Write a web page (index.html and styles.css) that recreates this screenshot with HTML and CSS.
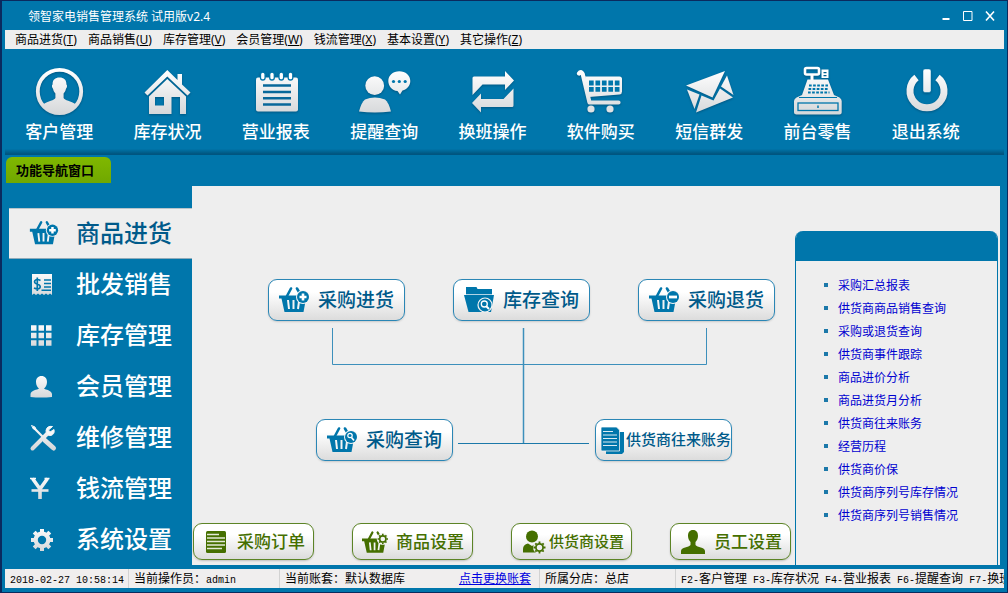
FILE: index.html
```html
<!DOCTYPE html>
<html lang="zh-CN">
<head>
<meta charset="utf-8">
<title>领智家电销售管理系统</title>
<link rel="stylesheet" href="styles.css">
</head>
<body>
<svg class="defs" aria-hidden="true">
  <defs>
    <linearGradient id="silver" gradientUnits="userSpaceOnUse" x1="0" y1="4" x2="0" y2="48">
      <stop offset="0" stop-color="#ffffff"/><stop offset="1" stop-color="#d6d8da"/>
    </linearGradient>
    <linearGradient id="silver-small" gradientUnits="userSpaceOnUse" x1="0" y1="2" x2="0" y2="28">
      <stop offset="0" stop-color="#ffffff"/><stop offset="1" stop-color="#d4d6d8"/>
    </linearGradient>
    <clipPath id="avatar-clip"><circle cx="28.5" cy="25.5" r="21"/></clipPath>
    <g id="basket">
      <path d="M8 9 12 1.5M18 1.5 20 5" fill="none" stroke="currentColor" stroke-width="2.6" stroke-linecap="round"/>
      <path d="M0 8.5H25V11.5H27L24.5 25H5.5L2.5 11.5H0Z" fill="currentColor"/>
      <path d="M9 13 10 22M14.5 13V22M20 14.5 19 22" fill="none" stroke="#f4f4f4" stroke-width="2"/>
    </g>
    <g id="gear">
      <circle r="3.6" fill="none" stroke="currentColor" stroke-width="1.8"/>
      <path d="M0-6V-4M0 6V4M-6 0H-4M6 0H4M-4.2-4.2-3-3M4.2-4.2 3-3M-4.2 4.2-3 3M4.2 4.2 3 3" stroke="currentColor" stroke-width="1.8"/>
    </g>
  </defs>
</svg>

<div class="window">
  <header class="titlebar">
    <h1 class="title">领智家电销售管理系统 试用版v2.4</h1>
    <div class="window-buttons">
      <button class="window-button" aria-label="最小化"><svg width="10" height="12" viewBox="0 0 10 12"><path d="M1.500 9H8.500" stroke="#fff" stroke-width="2"/></svg></button>
      <button class="window-button" aria-label="最大化"><svg width="10" height="12" viewBox="0 0 10 12"><path d="M.5 1.500H9V10.500H.5Z" fill="none" stroke="#fff"/></svg></button>
      <button class="window-button" aria-label="关闭"><svg width="10" height="12" viewBox="0 0 10 12"><path d="M1 1.500 9 10.500M9 1.500 1 10.500" stroke="#fff" stroke-width="1.600"/></svg></button>
    </div>
  </header>

  <nav class="menubar" aria-label="菜单">
    <button class="menu-item">商品进货(<u>T</u>)</button>
    <button class="menu-item">商品销售(<u>U</u>)</button>
    <button class="menu-item">库存管理(<u>V</u>)</button>
    <button class="menu-item">会员管理(<u>W</u>)</button>
    <button class="menu-item">钱流管理(<u>X</u>)</button>
    <button class="menu-item">基本设置(<u>Y</u>)</button>
    <button class="menu-item">其它操作(<u>Z</u>)</button>
  </nav>

  <div class="toolbar">
    <button class="tool">
      <svg class="tool-icon" viewBox="0 0 56 52">
        <circle cx="28.500" cy="25.500" r="21.700" fill="none" stroke="url(#silver)" stroke-width="3.800"/>
        <path clip-path="url(#avatar-clip)" fill="url(#silver)" d="M28.500 11.500C33 11.500 35.600 14 35.400 18.500 36.500 19 36 22 35 22.600 34.600 25 33.600 26.500 32.600 27.600V32C33.500 34.300 40 35 45 38.500L40 48H17L12 38.500C17 35 23.500 34.300 24.400 32V27.600C23.400 26.500 22.400 25 22 22.600 21 22 20.500 19 21.600 18.500 21.400 14 24 11.500 28.500 11.500Z"/>
      </svg>
      <span class="tool-label">客户管理</span>
    </button>
    <button class="tool">
      <svg class="tool-icon" viewBox="0 0 56 52" fill="url(#silver)">
        <path d="M28.300 4 38.500 14V8H43V18.500L51.500 26.500 48.500 29.500 28.300 10.500 8.500 29.500 5.500 26.500Z"/>
        <path fill-rule="evenodd" d="M28.300 13 47 30.500V48H41V31H32.500V48H10V30.500ZM16 31V39.500H25V31Z"/>
      </svg>
      <span class="tool-label">库存状况</span>
    </button>
    <button class="tool">
      <svg class="tool-icon" viewBox="0 0 56 52">
        <rect x="8" y="11.500" width="42" height="34" rx="2" fill="url(#silver)"/>
        <g fill="#fff" stroke="#0076ab" stroke-width="1.300"><rect x="12.500" y="6" width="4.600" height="8" rx="2.300"/><rect x="21.700" y="6" width="4.600" height="8" rx="2.300"/><rect x="31" y="6" width="4.600" height="8" rx="2.300"/><rect x="40.200" y="6" width="4.600" height="8" rx="2.300"/></g>
        <path d="M15 19.500H43M15 26H43M15 32.300H43M15 38.500H43" stroke="#08689a" stroke-width="2.400"/>
      </svg>
      <span class="tool-label">营业报表</span>
    </button>
    <button class="tool">
      <svg class="tool-icon" viewBox="0 0 56 52" fill="url(#silver)">
        <circle cx="18.700" cy="19.700" r="9.400"/>
        <path d="M9 33.500Q18.700 29.500 29 33.500 32.500 36 35 45.500 18.700 47.500 3 45.500 5.500 36 9 33.500Z"/>
        <path d="M43.300 5.300C49.500 5.300 54.300 9.500 54.300 15 54.300 19.500 51 23.500 46.500 24.500L44 28.500 41.500 25C36 24.500 32.300 20 32.300 15 32.300 9.500 37 5.300 43.300 5.300Z"/>
        <g fill="#0076ab"><circle cx="37.500" cy="15.500" r="1.600"/><circle cx="43.300" cy="15.500" r="1.600"/><circle cx="49.200" cy="15.500" r="1.600"/></g>
      </svg>
      <span class="tool-label">提醒查询</span>
    </button>
    <button class="tool">
      <svg class="tool-icon" viewBox="0 0 56 52" fill="url(#silver)">
        <path d="M10 10.500H41V5L50 14.500 41 24V18.500H18.500L8.500 29V12Q8.500 10.500 10 10.500Z"/>
        <path d="M48 41H17V46.500L8 37 17 27.500V33H39.500L49.500 22.500V39.500Q49.500 41 48 41Z"/>
      </svg>
      <span class="tool-label">换班操作</span>
    </button>
    <button class="tool">
      <svg class="tool-icon" viewBox="0 0 56 52">
        <path d="M6 7.500Q8 4.500 9.700 8L16.500 36.500H45.500" fill="none" stroke="url(#silver)" stroke-width="4.200" stroke-linecap="round" stroke-linejoin="round"/>
        <path d="M12 10.500H46.500Q49 10.500 49 13V25.500Q49 28 46.500 28.500L16 31Z" fill="url(#silver)"/>
        <path d="M16 17H46.500M16 23.300H46.500" stroke="#0076ab" stroke-width="4.800" stroke-dasharray="4.700 1.750"/>
        <circle cx="18" cy="43" r="3.600" fill="#e0e2e4"/><circle cx="37" cy="43" r="3.600" fill="#e0e2e4"/>
      </svg>
      <span class="tool-label">软件购买</span>
    </button>
    <button class="tool">
      <svg class="tool-icon" viewBox="0 0 56 52" fill="url(#silver)">
        <path d="M5 19.500 44 5 31.500 31.500Z"/>
        <path d="M6 23.500 18.500 28.500 13.500 43Z"/>
        <path d="M20.500 29.500 32.500 34.500 39 22.500 52 31.500 15 46.500Z"/>
        <path d="M46 9.500 52.500 29 40 20.500Z"/>
      </svg>
      <span class="tool-label">短信群发</span>
    </button>
    <button class="tool">
      <svg class="tool-icon" viewBox="0 0 56 52">
        <rect x="16" y="2" width="14" height="6.500" rx="1.500" fill="none" stroke="#fff" stroke-width="2.600"/>
        <path d="M23 9V15" stroke="#fff" stroke-width="3"/>
        <path fill-rule="evenodd" d="M32.500 3.500H39.500V12H32.500ZM34.500 6V7.200H37.500V6ZM34.500 9V10.200H37.500V9Z" fill="#fff"/>
        <path d="M18.500 13.500H39L45 29 50.500 31.500Q52.700 33 52.700 35V46.500Q52.700 48.500 50.500 48.500H7.500Q5 48.500 5 46.500V35Q5 33 7.500 31.500L13 29Z" fill="url(#silver)"/>
        <path d="M20 19.500H39M19.500 23H40M19 26.500H40.500" stroke="#0076ab" stroke-width="2.200" stroke-dasharray="2.700 1.400"/>
        <path d="M10 31.500H48" stroke="#0076ab" stroke-width="1"/>
        <rect x="9" y="37" width="40" height="7.500" fill="none" stroke="#0076ab" stroke-width="1.300"/>
        <path d="M29 39.500V42" stroke="#0076ab" stroke-width="1.500"/>
      </svg>
      <span class="tool-label">前台零售</span>
    </button>
    <button class="tool">
      <svg class="tool-icon" viewBox="0 0 56 52" fill="none">
        <path d="M18.500 11.500A17 17 0 1 0 39.500 11.500" stroke="url(#silver)" stroke-width="7"/>
        <rect x="25" y="3" width="8" height="23.500" rx="2" fill="url(#silver)" stroke="#0076ab" stroke-width=".5"/>
      </svg>
      <span class="tool-label">退出系统</span>
    </button>
  </div>

  <div class="tabs"><button class="tab">功能导航窗口</button></div>

  <div class="workspace">
    <nav class="sidebar" aria-label="功能导航">
      <button class="side-item side-item-active">
        <svg class="side-icon" viewBox="-2 -3 34 34"><use href="#basket"/><circle cx="24" cy="10" r="7" fill="#eee"/><circle cx="24" cy="10" r="6" fill="currentColor"/><path d="M24 6.500V13.500M20.500 10H27.500" stroke="#fff" stroke-width="2.600"/></svg>
        <span class="side-label">商品进货</span>
      </button>
      <button class="side-item">
        <svg class="side-icon" viewBox="0 0 32 32"><path d="M4 5H24V26L22 24.500 20 26 18 24.500 16 26 14 24.500 12 26 10 24.500 8 26 6 24.500 4 26Z" fill="url(#silver-small)"/><path d="M16 11H23M16 14.500H23M16 18H23M13.500 21.300H23" stroke="#0076ab" stroke-width="1.500"/><path d="M12.500 11.500Q9 9.500 7 11.500 5.500 14 9 15 13 16 12 18.700 10 21 6 19M9.300 8.500V22" fill="none" stroke="#0076ab" stroke-width="1.700"/></svg>
        <span class="side-label">批发销售</span>
      </button>
      <button class="side-item">
        <svg class="side-icon" viewBox="0 0 32 32"><path d="M3 8H24M3 15.500H24M3 23H24" stroke="url(#silver-small)" stroke-width="5.500" stroke-dasharray="5.500 2"/></svg>
        <span class="side-label">库存管理</span>
      </button>
      <button class="side-item">
        <svg class="side-icon" viewBox="0 0 32 32"><path fill="url(#silver-small)" d="M13.500 5C17 5 19 7.500 19 11 19 14 17.500 16.500 16 17.500 17.500 19 23.500 19 24 23V26Q13 27 2.500 26V23C3 19 9.500 19 11 17.500 9.500 16.500 8 14 8 11 8 7.500 10 5 13.500 5Z"/></svg>
        <span class="side-label">会员管理</span>
      </button>
      <button class="side-item">
        <svg class="side-icon" viewBox="0 0 32 32" fill="none" stroke="url(#silver-small)"><path d="M5 5 15 15" stroke-width="2.200"/><path d="M3.500 3.500 7 5 8 7.500 5.500 7Z" stroke-width="1"/><path d="M17 18.500 25.500 26" stroke-width="5" stroke-linecap="round"/><path d="M4.500 26.500 19 12" stroke-width="4" stroke-linecap="round"/><path d="M24.500 4.500Q19 3.500 18 8.500 18 14 23 13.500 27 12 26 7.500L22 10 20.500 8Z" fill="#f8f8f8" stroke-width="1"/></svg>
        <span class="side-label">维修管理</span>
      </button>
      <button class="side-item">
        <svg class="side-icon" viewBox="0 0 32 32" fill="none" stroke="url(#silver-small)"><path d="M4.500 5.500 12 16V26M19.500 5.500 12 16" stroke-width="3.600"/><path d="M2 5.500H8M16.500 5.500H21.500" stroke-width="1.600"/><path d="M3.500 17.500H20.500" stroke-width="2.600"/></svg>
        <span class="side-label">钱流管理</span>
      </button>
      <button class="side-item">
        <svg class="side-icon" viewBox="0 0 32 32" fill="none" stroke="url(#silver-small)"><circle cx="14" cy="16" r="6.300" stroke-width="4.200"/><path d="M14 5V9.500M14 22.500V27M3 16H7.500M20.500 16H25M6.200 8.200 9.500 11.500M18.500 11.500 21.800 8.200M6.200 23.800 9.500 20.500M18.500 20.500 21.800 23.800" stroke-width="4"/></svg>
        <span class="side-label">系统设置</span>
      </button>
    </nav>

    <main class="content">
      <div class="board">
        <div class="diagram">
          <svg class="wires" width="602" height="300" viewBox="0 0 602 300" fill="none" stroke="#3c8fbb">
            <path d="M140.500 142V178.500H514.500V142"/>
            <path d="M331.500 142V257" stroke-width="1.500"/>
            <path d="M266 257.500H397" stroke="#1b78a9"/>
          </svg>
          <button class="node node-purchase">
            <svg class="node-icon" width="30" height="26" viewBox="0 0 30 26"><use href="#basket"/><circle cx="24" cy="10" r="7" fill="#f6f6f6"/><circle cx="24" cy="10" r="6" fill="currentColor"/><path d="M24 6.500V13.500M20.500 10H27.500" stroke="#fff" stroke-width="2.600"/></svg>
            <span class="node-label">采购进货</span>
          </button>
          <button class="node node-stock">
            <svg class="node-icon" width="30" height="26" viewBox="0 0 30 26"><path d="M2 0H12.500L13.500 2H28V7H2Z" fill="currentColor"/><path d="M0 8H30L27 25H4.500Z" fill="currentColor"/><path d="M2 7.500H28" stroke="#9cc8de" stroke-width=".8"/><circle cx="21" cy="18" r="7" fill="#0076ab" stroke="#f4f4f4" stroke-width="1.200"/><circle cx="20.300" cy="17" r="3" fill="none" stroke="#fff" stroke-width="1.300"/><path d="M22.500 19.500 25 22" stroke="#fff" stroke-width="2"/></svg>
            <span class="node-label">库存查询</span>
          </button>
          <button class="node node-return">
            <svg class="node-icon" width="30" height="26" viewBox="0 0 30 26"><use href="#basket"/><circle cx="24" cy="10" r="7" fill="#f6f6f6"/><circle cx="24" cy="10" r="6" fill="currentColor"/><path d="M20 10H28" stroke="#fff" stroke-width="2.800"/></svg>
            <span class="node-label">采购退货</span>
          </button>
          <button class="node node-query">
            <svg class="node-icon" width="30" height="26" viewBox="0 0 30 26"><use href="#basket"/><circle cx="24" cy="10" r="7" fill="#f6f6f6"/><circle cx="24" cy="10" r="6" fill="currentColor"/><circle cx="23" cy="8.500" r="2.200" fill="none" stroke="#fff" stroke-width="1.200"/><path d="M24.500 10.500 27 13.500" stroke="#fff" stroke-width="1.700"/></svg>
            <span class="node-label">采购查询</span>
          </button>
          <button class="node node-account">
            <svg class="node-icon" width="23" height="27" viewBox="0 0 23 27"><path d="M7 5H23V25L21 27H5V22Z" fill="currentColor"/><path d="M1 0H15.500L18.500 3V24H1Q0 24 0 23V1Q0 0 1 0Z" fill="currentColor" stroke="#f4f4f4" stroke-width=".8"/><path d="M2 4.500H12M2 8H16M2 11.500H16M2 15H16M2 18.500H16" stroke="#dcebf2" stroke-width="1.200"/></svg>
            <span class="node-label">供货商往来账务</span>
          </button>
        </div>

        <div class="shortcuts">
          <button class="shortcut">
            <svg class="shortcut-icon" viewBox="0 0 26 24"><rect x="3" y="1" width="20" height="22" rx="1.500" fill="currentColor"/><path d="M4 4.500H16M4 8H22M4 11.500H22M4 15H22M4 18.500H19" stroke="#e4ead8" stroke-width="1.300"/></svg>
            <span class="node-label">采购订单</span>
          </button>
          <button class="shortcut">
            <svg class="shortcut-icon" viewBox="0 -1 30 27"><use href="#basket"/><circle cx="24" cy="9" r="7" fill="#f4f4f4"/><use href="#gear" x="24" y="9"/></svg>
            <span class="node-label">商品设置</span>
          </button>
          <button class="shortcut shortcut-long">
            <svg class="shortcut-icon" viewBox="0 0 26 24"><circle cx="11" cy="6.500" r="6" fill="currentColor"/><path d="M2 22.500V19Q2 14.500 7 13.500L11 16 15 13.500Q18 14 19.500 16V22.500Z" fill="currentColor"/><circle cx="18.500" cy="17.500" r="6.500" fill="#eee"/><use href="#gear" x="18.500" y="17.500"/></svg>
            <span class="node-label">供货商设置</span>
          </button>
          <button class="shortcut">
            <svg class="shortcut-icon" viewBox="0 0 26 24"><path d="M13 0C16.500 0 18 2.500 18 6 18 9 16.500 11 15.500 12V15C17 17.500 25 17 25 21V24H1V21C1 17 9 17.500 10.500 15V12C9.500 11 8 9 8 6 8 2.500 9.500 0 13 0Z" fill="currentColor"/></svg>
            <span class="node-label">员工设置</span>
          </button>
        </div>
      </div>

      <aside class="reports">
        <div class="reports-head"></div>
        <ul class="report-list">
          <li class="report"><a class="report-link" href="#">采购汇总报表</a></li>
          <li class="report"><a class="report-link" href="#">供货商商品销售查询</a></li>
          <li class="report"><a class="report-link" href="#">采购或退货查询</a></li>
          <li class="report"><a class="report-link" href="#">供货商事件跟踪</a></li>
          <li class="report"><a class="report-link" href="#">商品进价分析</a></li>
          <li class="report"><a class="report-link" href="#">商品进货月分析</a></li>
          <li class="report"><a class="report-link" href="#">供货商往来账务</a></li>
          <li class="report"><a class="report-link" href="#">经营历程</a></li>
          <li class="report"><a class="report-link" href="#">供货商价保</a></li>
          <li class="report"><a class="report-link" href="#">供货商序列号库存情况</a></li>
          <li class="report"><a class="report-link" href="#">供货商序列号销售情况</a></li>
        </ul>
      </aside>
    </main>
  </div>

  <footer class="statusbar">
    <div class="status-cell"><span class="mono">2018-02-27 10:58:14</span></div>
    <div class="status-cell">当前操作员：<span class="mono">admin</span></div>
    <div class="status-cell status-split"><span>当前账套：默认数据库</span><a class="status-link" href="#">点击更换账套</a></div>
    <div class="status-cell">所属分店：总店</div>
    <div class="status-cell status-keys"><span class="mono">F2-</span>客户管理<span class="mono"> F3-</span>库存状况<span class="mono"> F4-</span>营业报表<span class="mono"> F6-</span>提醒查询<span class="mono"> F7-</span>换班</div>
  </footer>
</div>
</body>
</html>
```

FILE: styles.css
```css
* {
  box-sizing: border-box;
}

body {
  margin: 0;
  font-family: "Noto Sans", "Noto Sans CJK SC", sans-serif;
  font-size: 12px;
  color: #000;
}

button {
  margin: 0;
  padding: 0;
  border: 0;
  background: none;
  color: inherit;
  font: inherit;
  white-space: nowrap;
  cursor: pointer;
}

.defs {
  position: absolute;
  width: 0;
  height: 0;
}

.window {
  display: flex;
  flex-direction: column;
  min-height: 100vh;
  padding: 0 3px;
  border: 1px solid #0a2a5e;
  border-left-width: 2px;
  background: #0076ab;
}

.titlebar {
  display: flex;
  align-items: center;
  justify-content: space-between;
  height: 29px;
  padding: 0 9px 0 23px;
  color: #fff;
}

.title {
  margin: 0;
  font-size: 12px;
  font-weight: 400;
}

.window-buttons {
  display: flex;
  gap: 12px;
}

.window-button {
  display: flex;
}

.menubar {
  display: flex;
  gap: 11px;
  height: 19px;
  padding: 0 10px;
  background: #eee;
}

.menu-item {
  line-height: 19px;
}

.toolbar {
  display: grid;
  grid-template-columns: repeat(9, 1fr);
  height: 106px;
  padding: 17px 24px 0 0;
  background: linear-gradient(#0076ab 95%, #00557f);
  border-bottom: 1px solid #005580;
}

.tool {
  display: flex;
  flex-direction: column;
  align-items: center;
  gap: 3px;
  color: #fff;
}

.tool-icon {
  width: 56px;
  height: 52px;
  filter: drop-shadow(0 1px 1px rgba(0, 40, 70, 0.4));
}

.tool-label {
  font-family: "Noto Sans CJK SC", sans-serif;
  font-size: 17px;
  font-weight: 500;
  line-height: 20px;
}

.tabs {
  height: 31px;
  padding: 2px 1px;
}

.tab {
  width: 105px;
  height: 26px;
  padding: 0 0 2px 10px;
  border-radius: 6px 6px 0 0;
  background: linear-gradient(#80b800, #70a800);
  font-size: 13px;
  font-weight: 700;
  text-align: left;
}

.workspace {
  display: flex;
  flex: 1;
  padding: 0 4px;
}

.sidebar {
  width: 183px;
  padding-top: 22px;
}

.side-item {
  display: flex;
  align-items: center;
  gap: 16px;
  width: 100%;
  height: 51px;
  padding-left: 19px;
  color: #fff;
  font-family: "Noto Sans CJK SC", sans-serif;
  font-size: 24px;
  font-weight: 500;
  line-height: 30px;
}

.side-item-active {
  background: #eee;
  border-top: 1px solid #b8c4ca;
  border-bottom: 1px solid #8fabba;
  color: #005a8a;
}

.side-item-active .side-icon {
  color: #0076ab;
}

.side-label {
  padding-bottom: 4px;
}

.side-icon {
  width: 32px;
  height: 32px;
}

.content {
  display: flex;
  flex: 1;
  min-width: 0;
  padding-right: 2px;
  background: #eee;
}

.board {
  display: flex;
  flex: 1;
  flex-direction: column;
  justify-content: space-between;
  padding-bottom: 5px;
}

.diagram {
  position: relative;
  height: 300px;
}

.wires {
  display: block;
}

.node {
  position: absolute;
  display: flex;
  align-items: center;
  gap: 9px;
  width: 137px;
  height: 42px;
  padding-left: 10px;
  border: 1px solid #2a86b5;
  border-radius: 9px;
  background: linear-gradient(#fff 30%, #dcdcdc);
  box-shadow: 0 1px 2px rgba(0, 0, 0, 0.15);
  color: #005a8a;
  font-family: "Noto Sans CJK SC", sans-serif;
  font-size: 19px;
  font-weight: 500;
}

.node-icon {
  color: #0076ab;
}

.node-label {
  padding-bottom: 3px;
}

.node-purchase {
  left: 76px;
  top: 93px;
}

.node-stock {
  left: 261px;
  top: 93px;
}

.node-return {
  left: 446px;
  top: 93px;
}

.node-query {
  left: 124px;
  top: 233px;
}

.node-account {
  left: 403px;
  top: 233px;
  gap: 2px;
  padding-left: 5px;
  font-size: 15px;
}

.shortcuts {
  display: flex;
  gap: 38px;
  padding-left: 1px;
}

.shortcut {
  display: flex;
  align-items: center;
  gap: 8px;
  width: 121px;
  height: 37px;
  padding-left: 9px;
  border: 1px solid #5c8426;
  border-radius: 9px;
  background: linear-gradient(#fff 30%, #dcdcdc);
  box-shadow: 0 1px 2px rgba(0, 0, 0, 0.2);
  color: #456f00;
  font-family: "Noto Sans CJK SC", sans-serif;
  font-size: 17px;
  font-weight: 500;
}

.shortcut-long {
  gap: 2px;
  font-size: 15px;
}

.shortcut-icon {
  width: 26px;
  height: 24px;
}

.reports {
  width: 203px;
  margin-top: 45px;
  border: 1px solid #0076ab;
  border-width: 0 1px;
  border-radius: 8px 8px 0 0;
}

.reports-head {
  height: 30px;
  border-radius: 7px 7px 0 0;
  background: #0076ab;
}

.report-list {
  margin: 0;
  padding: 12px 0 0 28px;
  list-style: none;
}

.report {
  display: flex;
  align-items: center;
  gap: 10px;
  height: 23px;
}

.report::before {
  content: "";
  width: 4px;
  height: 4px;
  background: #1b78a9;
}

.report-link {
  color: #0000d0;
  text-decoration: none;
}

.statusbar {
  display: grid;
  grid-template-columns: 124px 151px 260px 136px 1fr;
  height: 19px;
  margin: 4px 0;
  background: #f0eeee;
  font-family: "Noto Sans CJK SC", sans-serif;
  line-height: 18px;
}

.status-cell {
  min-width: 0;
  padding-left: 5px;
  border-right: 1px solid #d2d2d2;
  overflow: hidden;
  white-space: nowrap;
}

.status-keys {
  border-right: 0;
}

.status-split {
  display: flex;
  justify-content: space-between;
  padding-right: 8px;
}

.status-link {
  color: #0000e0;
}

.mono {
  font-family: "Liberation Mono", monospace;
  font-size: 10px;
  white-space: pre;
}
```
